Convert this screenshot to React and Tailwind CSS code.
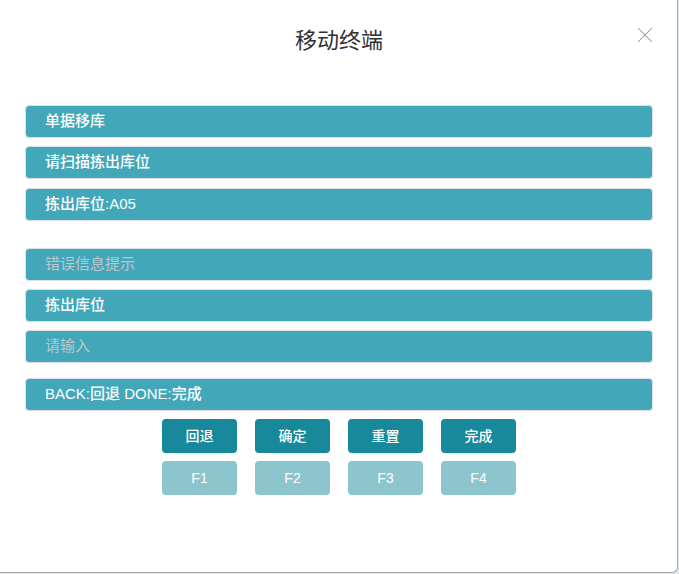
import { X } from 'lucide-react';

const rows = [
  { text: '单据移库', mt: 'mt-0' },
  { text: '请扫描拣出库位', mt: 'mt-2' },
  { text: '拣出库位:A05', mt: 'mt-[9px]' },
  { text: '错误信息提示', mt: 'mt-[27px]', placeholder: true },
  { text: '拣出库位', mt: 'mt-2' },
  { text: '请输入', mt: 'mt-2', placeholder: true },
  { text: 'BACK:回退 DONE:完成', mt: 'mt-[15px]' },
];

const actions = ['回退', '确定', '重置', '完成'];
const keys = ['F1', 'F2', 'F3', 'F4'];

export default function App() {
  return (
    <div
      className="w-[679px] h-[574px] bg-[#dfe7e8] overflow-hidden"
      style={{ fontFamily: '"Liberation Sans", "Noto Sans CJK SC", sans-serif' }}
    >
      <div className="w-[678px] h-[573px] bg-white border-r border-b border-[#a9a9a9] rounded-br-[6px] flex flex-col pl-[25px] pr-[24px]">
        <div className="relative h-[80px] flex items-center justify-center">
          <h1 className="text-[22px] text-[#303133] font-normal">移动终端</h1>
          <button className="absolute right-[-5px] top-[22px] text-[#909399]">
            <X size={26} strokeWidth={0.95} />
          </button>
        </div>

        <div className="mt-[25px] flex flex-col">
          {rows.map((r) => (
            <div
              key={r.text}
              className={`${r.mt} h-[33px] flex items-center pl-[19px] rounded-[4px] border border-[#dcdfe6] bg-[#42a7b9] text-[15px] ${
                r.placeholder ? 'text-[#b9c9cd] font-normal' : 'text-white font-medium'
              }`}
            >
              {r.text}
            </div>
          ))}
        </div>

        <div className="mt-2 flex justify-center gap-[18px]">
          {actions.map((a) => (
            <button
              key={a}
              className="w-[75px] h-[34px] rounded-[4px] bg-[#17899a] text-white text-sm font-medium"
            >
              {a}
            </button>
          ))}
        </div>
        <div className="mt-2 flex justify-center gap-[18px]">
          {keys.map((k) => (
            <button
              key={k}
              className="w-[75px] h-[34px] rounded-[4px] bg-[#8cc5ce] text-white text-sm"
            >
              {k}
            </button>
          ))}
        </div>
      </div>
    </div>
  );
}
